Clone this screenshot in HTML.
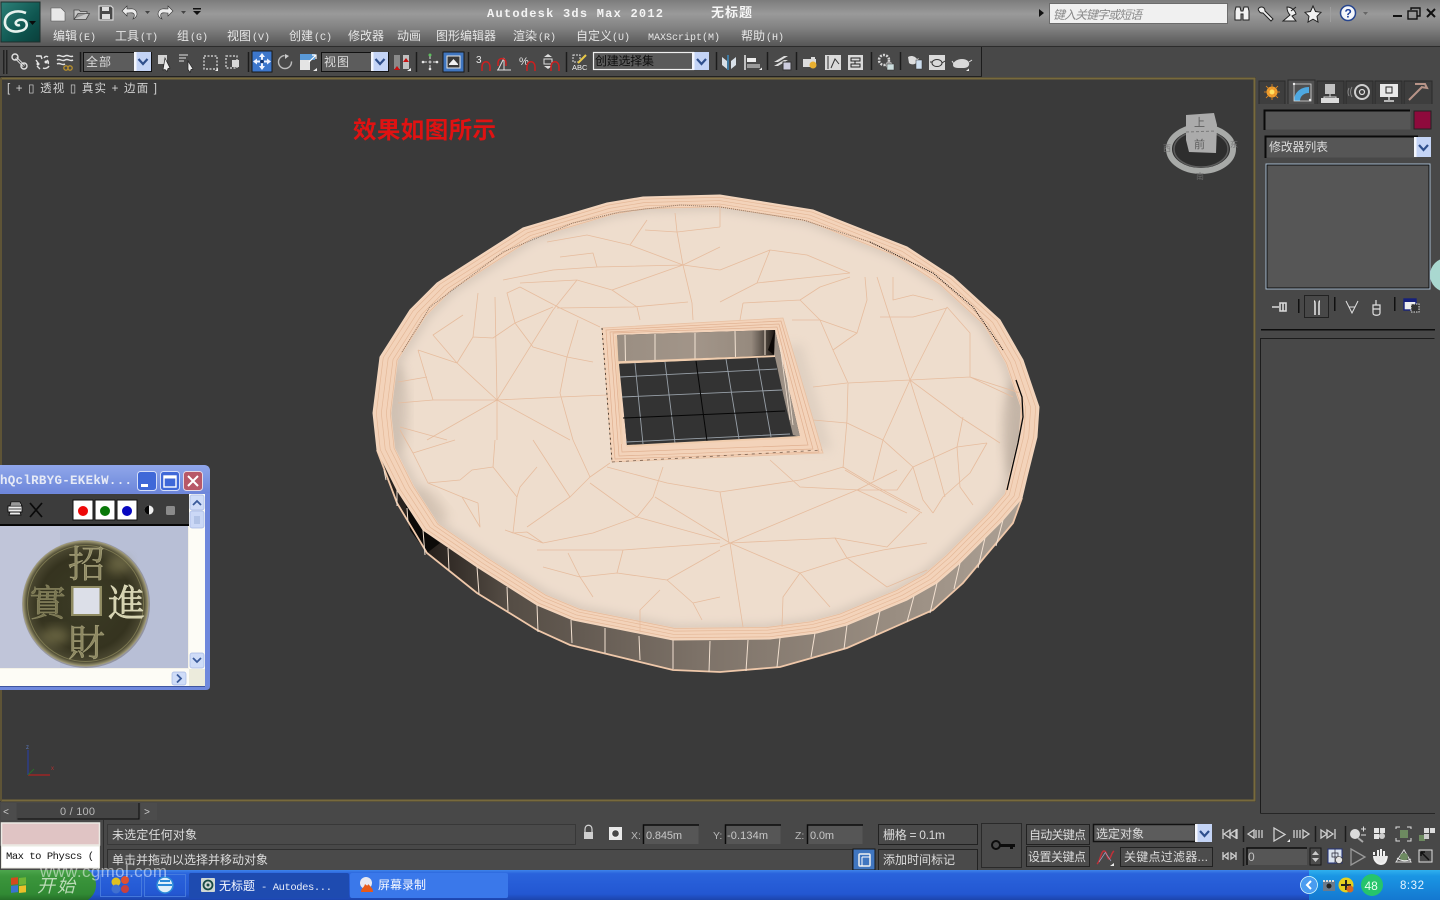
<!DOCTYPE html>
<html><head><meta charset="utf-8"><title>Autodesk 3ds Max 2012</title>
<style>
html,body{margin:0;padding:0;background:#3a3a3a;overflow:hidden;width:1440px;height:900px}
svg{display:block;position:absolute;left:0;top:0}
text{font-family:"Liberation Sans","WenQuanYi Zen Hei","Noto Sans CJK SC",sans-serif;font-size:12px;fill:#dcdcdc}
.m{fill:#e6e6e6}
.mono{font-family:"Liberation Mono","WenQuanYi Zen Hei",monospace}
.ico{fill:none;stroke:#e2e2e2;stroke-width:1.4}
.wh{fill:#e6e6e6;stroke:none}
.sep{stroke:#1c1c1c;stroke-width:1.5}
.wire{fill:none;stroke:#e6bc9e;stroke-width:.8;stroke-linejoin:round}
.side{stroke:#f2e0d0;stroke-width:1}
.cg{font-family:"Noto Serif CJK SC","Liberation Serif",serif;font-size:37px;font-weight:400;stroke-width:.5}
</style></head><body>
<svg width="1440" height="900" viewBox="0 0 1440 900" xmlns="http://www.w3.org/2000/svg">
<defs>
<linearGradient id="tb" x1="0" y1="0" x2="0" y2="1"><stop offset="0" stop-color="#7c7c7c"/><stop offset=".3" stop-color="#9a9a9a"/><stop offset=".6" stop-color="#828282"/><stop offset="1" stop-color="#565656"/></linearGradient>
<linearGradient id="logo" x1="0" y1="0" x2="1" y2="1"><stop offset="0" stop-color="#2d8078"/><stop offset=".6" stop-color="#0f5650"/><stop offset="1" stop-color="#0a3f3b"/></linearGradient>
<linearGradient id="task" x1="0" y1="0" x2="0" y2="1"><stop offset="0" stop-color="#3e84ea"/><stop offset=".12" stop-color="#2a63dc"/><stop offset=".8" stop-color="#2357d2"/><stop offset="1" stop-color="#1c44ac"/></linearGradient>
<linearGradient id="start" x1="0" y1="0" x2="0" y2="1"><stop offset="0" stop-color="#4da64d"/><stop offset=".2" stop-color="#3c963c"/><stop offset=".8" stop-color="#318a34"/><stop offset="1" stop-color="#256f28"/></linearGradient>
<linearGradient id="tray" x1="0" y1="0" x2="0" y2="1"><stop offset="0" stop-color="#2fb0ee"/><stop offset=".2" stop-color="#1a96e4"/><stop offset="1" stop-color="#1478d0"/></linearGradient>
<linearGradient id="wint" x1="0" y1="0" x2="0" y2="1"><stop offset="0" stop-color="#90a6ea"/><stop offset=".5" stop-color="#7e97e2"/><stop offset="1" stop-color="#6d86da"/></linearGradient>
<linearGradient id="sideg" x1="0" y1="0" x2="1" y2="0"><stop offset="0" stop-color="#2a2420"/><stop offset=".08" stop-color="#26201c"/><stop offset=".2" stop-color="#544c44"/><stop offset=".5" stop-color="#7d7268"/><stop offset=".8" stop-color="#998d81"/><stop offset="1" stop-color="#aca094"/></linearGradient>
<linearGradient id="wallg" x1="0" y1="0" x2="1" y2="0"><stop offset="0" stop-color="#9a8e82"/><stop offset=".5" stop-color="#a29589"/><stop offset=".85" stop-color="#968a7e"/><stop offset="1" stop-color="#1c1612"/></linearGradient>
<radialGradient id="coin" cx=".5" cy=".5" r=".5"><stop offset="0" stop-color="#3c3c26"/><stop offset=".75" stop-color="#35331f"/><stop offset=".93" stop-color="#4c4932"/><stop offset="1" stop-color="#a8a27c"/></radialGradient>
<filter id="bl" x="-10%" y="-10%" width="120%" height="120%"><feGaussianBlur stdDeviation="5"/></filter>
<filter id="bs" x="-30%" y="-30%" width="160%" height="160%"><feGaussianBlur stdDeviation="5"/></filter>
<polygon id="top" points="373,413 380,357 410,310 437,283 523,228 607,203 643,197 720,195 813,210 907,247 953,277 1000,320 1023,360 1039,407 1037,437 1027,477 1022,498 1003,520 960,563 937,583 907,600 847,625 817,633 770,639 673,640 573,620 537,605 477,567 423,530 397,490 377,450"/>
<clipPath id="inner"><polygon transform="translate(706,418) scale(.945) translate(-706,-418)" points="373,413 380,357 410,310 437,283 523,228 607,203 643,197 720,195 813,210 907,247 953,277 1000,320 1023,360 1039,407 1037,437 1027,477 1022,498 1003,520 960,563 937,583 907,600 847,625 817,633 770,639 673,640 573,620 537,605 477,567 423,530 397,490 377,450"/></clipPath>
<clipPath id="img"><rect x="0" y="526" width="188" height="142"/></clipPath>
<g id="dd"><rect x="0" y="0" width="17" height="19" fill="#c4d4f6"/><rect x="0" y="0" width="2.5" height="19" fill="#f4f6fc"/><path d="M4.5 7l4.5 5 4.5-5" fill="none" stroke="#2f4f8c" stroke-width="2.2"/></g>
</defs>

<!-- base -->
<rect width="1440" height="900" fill="#484848"/>
<!-- title bar -->
<rect width="1440" height="46" fill="url(#tb)"/>
<rect y="46" width="1440" height="1" fill="#2c2c2c"/>
<!-- app logo -->
<rect x="1" y="2" width="39" height="40" fill="url(#logo)" stroke="#1e2e2c"/>
<path d="M26 13C16 9 6 13 5 21c-1 8 7 12 15 10 6-1 8-5 6-9-2-3-8-3-10 0-1 2 1 4 4 3" fill="none" stroke="#e8f2ee" stroke-width="2.6"/>
<path d="M29 21l7 0-3.500 4z" fill="#0a0a0a"/>
<!-- quick access -->
<path d="M51 8h10l4 4v9H51z" fill="#e8e8e8" stroke="#555" stroke-width=".6"/>
<path d="M74 19V10h5l1.500 1.500H87v2h-9l-4 6h12l3.500-6H87" fill="#c8c8c8" stroke="#444" stroke-width=".8"/>
<path d="M99 6h12l2 2v12H99z" fill="#484848" stroke="#d8d8d8" stroke-width="1.200"/>
<rect x="102" y="7" width="7" height="4" fill="#dcdcdc"/><rect x="102" y="14" width="8" height="5" fill="#dcdcdc"/>
<path d="M133 19c4-2 5-5 3-8s-5-2-9-2V6l-5 5 5 5v-3c3 0 6-1 7 1s0 3-1 5z" fill="#ececec" stroke="#333" stroke-width=".6"/>
<path d="M145 11h5l-2.500 3z" fill="#444"/>
<path d="M162 19c-4-2-5-5-3-8s5-2 9-2V6l5 5-5 5v-3c-3 0-6-1-7 1s0 3 1 5z" fill="#ececec" stroke="#333" stroke-width=".6"/>
<path d="M181 11h5l-2.500 3z" fill="#444"/>
<rect x="193" y="8" width="8" height="1.500" fill="#111"/><path d="M193 11h8l-4 4z" fill="#111"/>
<!-- title -->
<text class="mono" x="487" y="17" style="font-size:12px;fill:#f4f4f4;font-weight:700" textLength="176">Autodesk 3ds Max  2012</text>
<text x="711" y="17" style="font-size:13px;fill:#f6f6f6;font-weight:700" textLength="41">无标题</text>
<!-- search -->
<path d="M1039 9l5 4-5 4z" fill="#111"/>
<rect x="1049.500" y="3.500" width="178" height="20" fill="#f0f0f0" stroke="#6c6c6c"/>
<text x="1053" y="19" style="fill:#8a8a8a;font-style:italic" textLength="89">键入关键字或短语</text>
<path d="M1235 11l1-4h4l1 4h2l1-4h4l1 4v9h-6v-6h-2v6h-6z" fill="#f2f2f2" stroke="#222" stroke-width="1"/>
<path d="M1259 8a3.500 3.500 0 0 1 5 0c1 1 1 2 1 3l8 8-2 2-8-8c-2 0-3 0-4-2-1-1-1-2 0-3z" fill="#f0f0f0" stroke="#222"/>
<path d="M1283 21h13l-4-5 4-2c-1-4-5-7-9-7 0 3 1 6 3 8zM1291 11l5-4" fill="#f0f0f0" stroke="#222"/>
<path d="M1313 6l2.500 5.500 5.500.8-4 4 1 5.700-5-2.800-5 2.800 1-5.700-4-4 5.500-.8z" fill="#f2f2f2" stroke="#222"/>
<line x1="1330.500" y1="7" x2="1330.500" y2="22" stroke="#9e9e9e"/>
<circle cx="1348" cy="13" r="7.500" fill="#f4f6fa" stroke="#26458e" stroke-width="1.500"/>
<text x="1344.500" y="17.500" style="fill:#1d3f9a;font-weight:700;font-size:12px">?</text>
<path d="M1363 12h5l-2.500 3z" fill="#666"/>
<rect x="1393" y="15" width="9" height="2" fill="#111"/>
<rect x="1408" y="11" width="9" height="8" fill="none" stroke="#111" stroke-width="1.400"/><path d="M1411 10V8h9v8h-3" fill="none" stroke="#111" stroke-width="1.400"/>
<path d="M1427 9l8 8M1435 9l-8 8" stroke="#111" stroke-width="2"/>
<!-- menu -->
<text class="m" x="53" y="40">编辑</text><text class="m mono" x="78" y="40" style="font-size:10px">(E)</text>
<text class="m" x="115" y="40">工具</text><text class="m mono" x="140" y="40" style="font-size:10px">(T)</text>
<text class="m" x="177" y="40">组</text><text class="m mono" x="190" y="40" style="font-size:10px">(G)</text>
<text class="m" x="227" y="40">视图</text><text class="m mono" x="252" y="40" style="font-size:10px">(V)</text>
<text class="m" x="289" y="40">创建</text><text class="m mono" x="314" y="40" style="font-size:10px">(C)</text>
<text class="m" x="348" y="40">修改器</text>
<text class="m" x="397" y="40">动画</text>
<text class="m" x="436" y="40">图形编辑器</text>
<text class="m" x="513" y="40">渲染</text><text class="m mono" x="538" y="40" style="font-size:10px">(R)</text>
<text class="m" x="576" y="40">自定义</text><text class="m mono" x="612" y="40" style="font-size:10px">(U)</text>
<text class="m mono" x="648" y="40" style="font-size:10px" textLength="72">MAXScript(M)</text>
<text class="m" x="741" y="40">帮助</text><text class="m mono" x="766" y="40" style="font-size:10px">(H)</text>

<!-- main toolbar -->
<rect y="47" width="982" height="30" fill="#494949"/>
<rect x="981" y="47" width="1" height="30" fill="#1c1c1c"/>
<rect x="0" y="76" width="982" height="1" fill="#222"/>
<rect x="3" y="50" width="1.500" height="24" fill="#222"/><rect x="6" y="50" width="1.500" height="24" fill="#222"/>
<!-- link -->
<path d="M16 58l8 8" stroke="#e2e2e2" stroke-width="3"/><path d="M16 58l8 8" stroke="#494949" stroke-width="1"/><circle cx="15" cy="57" r="3" class="ico"/><circle cx="24" cy="66" r="3" class="ico"/>
<path d="M36 56h5l1 3M48 57c-1-1-3-1-4 1M36 60l2 3M43 68c2 1 5 0 6-2M47 60c1 1 2 2 1 4M37 66l3 3" class="ico"/>
<circle cx="38" cy="64" r="1.500" class="wh"/><circle cx="46" cy="62" r="1.500" class="wh"/>
<path d="M57 56c3-2 5 2 8 0s5 2 8 0M57 60c3-2 5 2 8 0s5 2 8 0M57 64c3-2 5 2 8 0" class="ico" stroke-width="1.100"/>
<circle cx="66" cy="68" r="2.200" fill="none" stroke="#b9902c" stroke-width="1.300"/><circle cx="70" cy="68" r="2.200" fill="none" stroke="#b9902c" stroke-width="1.300"/>
<line class="sep" x1="80.500" y1="52" x2="80.500" y2="72"/>
<!-- filter dd -->
<rect x="83.500" y="52.500" width="68" height="19" fill="#5c5c5c" stroke="#121212"/>
<text x="86" y="66" textLength="25">全部</text>
<use href="#dd" x="134" y="52"/>
<!-- select -->
<rect x="158" y="55" width="9" height="9" fill="#d4d4d4"/>
<path d="M165 58l5 10-2 .5-1 3-2-2-2 .5z" fill="#eee" stroke="#222" stroke-width=".7"/>
<path d="M179 55h9M179 58h7M179 61h5" stroke="#e2e2e2" stroke-width="1"/><path d="M188 61l5 8-2 .5-1 3-2-3z" fill="#eee" stroke="#222" stroke-width=".7"/>
<rect x="204" y="56" width="13" height="13" fill="none" stroke="#e2e2e2" stroke-width="1.200" stroke-dasharray="2 1.500"/>
<path d="M215 71l3-3v3z" fill="#eee"/>
<rect x="226" y="56" width="11" height="12" fill="none" stroke="#e2e2e2" stroke-width="1.200" stroke-dasharray="2 1.500"/>
<rect x="232" y="60" width="7" height="7" fill="#d8d8d8"/>
<line class="sep" x1="248.500" y1="52" x2="248.500" y2="72"/>
<!-- move -->
<rect x="252" y="51" width="20" height="21" fill="#3d77cc" stroke="#181818"/>
<path d="M262 53l3 4h-2v3h-2v-3h-2zM262 70l3-4h-2v-3h-2v3h-2zM253 61.500l4-3v2h3v2h-3v2zM271 61.500l-4-3v2h-3v2h3v2z" fill="#f0f4ff"/>
<circle cx="262" cy="61.500" r="1.800" fill="#16366e"/>
<circle cx="285" cy="62" r="6.500" fill="none" stroke="#bdbdbd" stroke-width="1.400" stroke-dasharray="30 10"/><path d="M285 54l4 2-4 3z" fill="#ccc"/>
<rect x="300" y="60" width="10" height="10" fill="#e4e4e4"/><rect x="300" y="54" width="15" height="6" fill="#5a9ad8"/><path d="M309 62l7-7M312 55h4v4" stroke="#fff" fill="none" stroke-width="1.200"/><path d="M313 71l4-3v3z" fill="#eee"/>
<rect x="321.500" y="52.500" width="67" height="19" fill="#5c5c5c" stroke="#121212"/>
<text x="324" y="66" textLength="25">视图</text>
<use href="#dd" x="371" y="52"/>
<rect x="394" y="55" width="6" height="14" fill="#8a8a8a"/><rect x="403" y="55" width="6" height="14" fill="#c0c0c0"/><path d="M394 70l3-4 3 4zM403 62l3-4 3 4z" fill="#c81010"/><path d="M407 71l4-3v3z" fill="#eee"/>
<line class="sep" x1="416.500" y1="52" x2="416.500" y2="72"/>
<path d="M430 56v12M424 62h12" stroke="#dcdcdc" stroke-width="1" stroke-dasharray="3 1.500"/><circle cx="430" cy="55" r="1.500" fill="#5dc05d"/><circle cx="423" cy="62" r="1.300" class="wh"/><circle cx="430" cy="69" r="1.300" class="wh"/><circle cx="437" cy="62" r="1.300" class="wh"/>
<rect x="443" y="52" width="21" height="20" fill="#4076c0" stroke="#181818"/>
<path d="M447 56h13v12h-13z" fill="#3a3a3a" stroke="#e8e8e8"/><path d="M449 65h9v-1l-4.500-5-4.500 5z" fill="#f2f2f2"/>
<line class="sep" x1="468.500" y1="52" x2="468.500" y2="72"/>
<!-- snaps -->
<text x="476" y="63" style="font-size:10px;fill:#e8e8e8">3</text><path d="M482 71v-4c0-7 8-7 8 0v4" fill="none" stroke="#cc2020" stroke-width="1.500"/>
<path d="M498 70l6-12v12zM497 70h14" fill="none" stroke="#ddd" stroke-width="1"/><path d="M498 66v-3c0-6 8-6 8 0v3" fill="none" stroke="#cc2020" stroke-width="1.500"/>
<text x="519" y="65" style="font-size:11px;fill:#e8e8e8">%</text><path d="M527 71v-4c0-7 8-7 8 0v4" fill="none" stroke="#cc2020" stroke-width="1.500"/>
<path d="M544 57l4-3 4 3zM544 66l4 3 4-3z" fill="#ddd"/><rect x="544" y="59" width="8" height="5" fill="none" stroke="#ddd"/><path d="M551 71v-4c0-7 8-7 8 0v4" fill="none" stroke="#cc2020" stroke-width="1.500"/>
<line class="sep" x1="566.500" y1="52" x2="566.500" y2="72"/>
<path d="M573 55h7v7h-7z" fill="none" stroke="#ddd" stroke-dasharray="2 1"/><path d="M578 63l8-8" stroke="#e8c848" stroke-width="2"/>
<text x="572" y="70" style="font-size:7.500px;fill:#eee">ABC</text>
<!-- named sel -->
<rect x="593.500" y="52.500" width="100" height="17" fill="#5a5a5a" stroke="#f0f0f0" stroke-width="1.200"/>
<text x="595" y="65" style="fill:#0e0e0e" textLength="59">创建选择集</text>
<rect x="692" y="52" width="17" height="18" fill="#c4d4f6"/><rect x="692" y="52" width="2.500" height="18" fill="#f4f6fc"/><path d="M697 59l4.500 5 4.500-5" fill="none" stroke="#2f4f8c" stroke-width="2.200"/>
<line class="sep" x1="716.500" y1="52" x2="716.500" y2="70"/>
<path d="M722 57l5 4v8l-5-4zM736 57l-5 4v8l5-4z" fill="#d8e0e8"/><path d="M728 55v15" stroke="#3a8ac0" stroke-width="1.500"/>
<path d="M745 55v15" stroke="#e8e8e8" stroke-width="1.500"/><rect x="747" y="58" width="9" height="4" fill="#eee"/><rect x="747" y="64" width="13" height="4" fill="#999"/><path d="M759 70l3-2.500v2.500z" fill="#eee"/>
<line class="sep" x1="767.500" y1="52" x2="767.500" y2="70"/>
<path d="M774 62l10-6h4l-10 6zM774 66l10-6h4l-10 6z" fill="#ddd"/><rect x="783" y="62" width="8" height="8" fill="#ccd" stroke="#333"/>
<line class="sep" x1="796.500" y1="52" x2="796.500" y2="70"/>
<path d="M803 59h8v-2h4v2h1v8h-13z" fill="#dcdcdc"/><circle cx="813" cy="65" r="3.500" fill="#e8b030"/>
<rect x="825" y="55" width="16" height="15" fill="#dadada"/><path d="M828 56v13M831 68l4-9 4 5" stroke="#333" fill="none"/>
<rect x="848" y="55" width="15" height="15" fill="#dadada"/><path d="M851 58h9v3h-9zM851 64h9v3h-9z" fill="none" stroke="#222"/><path d="M855 61v3" stroke="#222"/>
<line class="sep" x1="871.500" y1="52" x2="871.500" y2="70"/>
<circle cx="884" cy="60" r="5" fill="none" stroke="#d4d4d4" stroke-width="2.500" stroke-dasharray="2 1.200"/><circle cx="889" cy="65" r="3.500" fill="#aaa"/><rect x="887" y="64" width="7" height="6" fill="#cdd" stroke="#333" stroke-width=".5"/>
<line class="sep" x1="900.500" y1="52" x2="900.500" y2="70"/>
<path d="M908 57c3-2 7-1 9 2l2-1-2 4c-2 3-6 3-8 1z" fill="#ddd"/><rect x="916" y="60" width="6" height="9" fill="#cde" stroke="#333" stroke-width=".5"/>
<rect x="929" y="55" width="16" height="15" fill="#dadada"/><ellipse cx="937" cy="63" rx="5" ry="3.500" fill="none" stroke="#333"/><path d="M932 62h-2M942 63l3-2" stroke="#333"/>
<path d="M953 65c0-3 4-6 9-6s8 3 7 6c-1 3-4 3-8 3s-8 0-8-3z" fill="#d8d8d8"/><path d="M954 64l-2-3M969 62l3-2" stroke="#ddd"/><path d="M966 71l3-2.500v2.500z" fill="#eee"/>

<!-- viewport -->
<rect x="0" y="77" width="1256" height="726" fill="#3a3a3a"/>
<path d="M1 78.500H1254.500V800.500H1" fill="none" stroke="#786a3c" stroke-width="2"/>
<line x1="1" y1="78" x2="1" y2="801" stroke="#5e5436" stroke-width="2"/>
<text x="7" y="92" style="fill:#d2d2d2;font-size:11.500px" textLength="150" xml:space="preserve">[ + ▯ 透视 ▯ 真实 + 边面 ]</text>
<text x="353" y="138" style="font-size:23.500px;font-weight:700;fill:#e01212" textLength="143">效果如图所示</text>

<!-- nav cube -->
<ellipse cx="1201" cy="149" rx="32" ry="22" fill="#2e2e2e" stroke="#a8aaa8" stroke-width="6"/>
<ellipse cx="1201" cy="149" rx="27" ry="18" fill="none" stroke="#5c5c5c" stroke-width="1.500"/>
<path d="M1186 115l28-2 3 12-1 28-27-1-3-12z" fill="#ababab"/>
<path d="M1186 132l30-1" stroke="#7a7a7a" stroke-dasharray="3 2"/>
<text x="1194" y="126" style="font-size:11px;fill:#5e5e5e">上</text>
<text x="1194" y="148" style="font-size:11px;fill:#5e5e5e">前</text>
<text x="1163" y="151" style="font-size:8px;fill:#777">西</text>
<text x="1230" y="147" style="font-size:8px;fill:#777">东</text>
<text x="1196" y="179" style="font-size:8px;fill:#6a6a6a">南</text>

<!-- axis gizmo -->
<path d="M28 775V750" stroke="#2a3e9c" stroke-width="1.200"/><path d="M28 775H50" stroke="#b02020" stroke-width="1.200"/><path d="M28 775l6-6" stroke="#2a6e2a"/>
<text x="26" y="749" style="font-size:6px;fill:#5a78c0">z</text><text x="51" y="770" style="font-size:6px;fill:#b03030">x</text>

<!-- coin side -->
<polygon points="377,450 397,503 427,553 477,593 537,630 570,645 673,670 720,672 780,667 847,648 933,610 963,583 1013,523 1022,498 1003,520 960,563 937,583 907,600 847,625 817,633 770,639 673,640 573,620 537,605 477,567 423,530 397,490" fill="url(#sideg)"/>
<polygon points="405,500 423,530 440,543 427,553 410,530" fill="#0c0a08"/>
<path d="M377 450L397 503 427 553 477 593 537 630 570 645 673 670 720 672 780 667 847 648 933 610 963 583 1013 523 1022 498" fill="none" stroke="#efc8aa" stroke-width="1.800"/>
<g class="side">
<path d="M384 470l2 10M397 490v16M407 508l1 14M423 530l2 25M448 548l1 22M477 567l2 27M507 587l1 24M537 605l1 27M571 620l1 23M605 628v25M639 636l1 24M673 640v29M710 641l-1 31M748 640l-2 31M780 638l-3 29M815 633l-4 24M847 625l-3 24M880 611l-5 24M914 596l-7 26M937 583l-7 30M960 563l-6 26M985 538l-7 30M1003 520l-7 26"/>
</g>
<!-- coin top -->
<use href="#top" fill="#f3d3ba" stroke="#f3d6be" stroke-width="1"/>
<g fill="none" stroke="#e4b898" stroke-width=".7">
<use href="#top" transform="translate(706,418) scale(.99) translate(-706,-418)"/>
<use href="#top" transform="translate(706,418) scale(.975) translate(-706,-418)"/>
<use href="#top" transform="translate(706,418) scale(.96) translate(-706,-418)"/>
<use href="#top" transform="translate(706,418) scale(.948) translate(-706,-418)"/>
</g>
<!-- inner surface with shading -->
<g clip-path="url(#inner)">
<rect x="340" y="170" width="740" height="500" fill="#d9cabc"/>
<use href="#top" fill="#eeddcd" filter="url(#bl)" transform="translate(706,418) scale(.93) translate(-706,-418)"/>
<ellipse cx="432" cy="505" rx="22" ry="9" fill="#c2b2a2" opacity=".45" filter="url(#bs)" transform="rotate(50 432 505)"/>
<ellipse cx="1015" cy="430" rx="12" ry="50" fill="#b0a294" opacity=".6" filter="url(#bs)"/>
<ellipse cx="398" cy="410" rx="10" ry="45" fill="#c4b6a8" opacity=".6" filter="url(#bs)"/>
<polygon points="802,345 832,450 800,450 785,345" fill="#c6baae" opacity=".35" filter="url(#bs)"/>
</g>
<!-- dashed rim -->
<path d="M402 352L430 307 503 252 573 223 620 212 680 205 720 207 803 220 870 242" fill="none" stroke="#6a5444" stroke-width="1" stroke-dasharray="1 1" opacity=".7"/>
<path d="M870 242L933 273 973 307 1003 350" fill="none" stroke="#241a14" stroke-width="1.100" stroke-dasharray="1 1"/>
<path d="M1016 380L1022 397 1023 417 1018 443 1007 490" fill="none" stroke="#080808" stroke-width="1.300"/>
<!-- wires -->
<g class="wire">
<path d="M418 350L433 400 497 400 560 397 607 395M497 400L457 363 418 350M457 363L433 335 463 315M497 400L495 297M497 400L553 310 577 280M457 363L473 337 478 293M473 337L493 338 515 323 553 307M515 323L507 293 520 287M515 323L533 347 567 357 593 362M567 357L560 393 573 440M578 320L567 357M520 287L560 308 600 327M520 283L577 280 612 290 637 307 640 320M557 308L633 307 688 302M503 280L553 270 597 267 683 265M683 265L630 245 587 235 547 242M597 267L593 253 560 257M630 245L647 220M683 265L677 232 675 213M645 230L677 232 720 227M683 265L720 247M683 265L692 303 693 320M683 265L612 290M683 265L720 270M497 400L570 440M497 400L497 440M497 400L427 440M398 403L433 400M400 427L447 440M398 382L427 377"/>
<path d="M495 440L493 467 472 470 460 480M455 440L413 453 428 483 462 497 478 503M460 480L428 483M493 467L517 497 513 533M462 497L480 527 478 503M537 467L520 487 517 497M533 440L570 497 527 527M573 440L590 477 570 497M610 463L590 477M590 483L637 517 720 540M663 467L653 497 637 517 593 533 543 543 527 532M537 550L623 550 720 543M623 550L617 573 580 577 568 553M617 573L667 580 693 603 702 620M543 567L580 577 593 597M667 580L720 550M693 603L720 597M607 467L667 483 720 492M413 453L400 430M527 532L513 533 505 530M505 530L543 543"/>
<path d="M720 270L770 250 807 255 850 273M770 250L757 283 720 302M757 283L813 277 850 273M743 303L740 320M743 303L800 300 820 287 850 277M800 300L820 320 857 333 867 300 865 277M820 320L792 320M820 320L833 350 848 383 847 420 843 468M857 333L833 350M848 383L910 380 970 377 1020 393M910 380L877 277M910 380L947 307M910 380L883 440 873 480M910 380L960 417 1000 443M910 380L933 453 945 497M880 317L893 317 913 317 947 308M893 277L893 300 913 295 933 300M947 307L970 333 970 377 1013 397M847 383L813 387M813 420L847 423 883 440 913 467 897 490 857 490M913 467L923 500 933 513M913 467L957 447 987 443M963 417L957 447 960 487 973 505M987 443L970 473 943 497 933 513M770 460L800 487 860 490M843 467L870 483 920 510M845 470L872 486 922 513M720 492L800 480 843 467M730 543L857 490 897 470M730 543L835 538 847 558 800 573 783 597 782 627M730 543L800 573M730 543L743 627M720 547L730 543M847 558L883 550 927 543M847 558L887 587 927 570M835 538L887 547 920 513M800 573L830 607M907 513L857 490M655 497L730 543M640 632L640 610 660 590"/>
<path d="M720 205L720 227M720 492L729 543"/>
</g>

<!-- hole -->
<polygon points="602,328 783,318 823,453 612,462" fill="#f3d3ba" stroke="#e8c0a2" stroke-width=".8"/>
<g fill="none" stroke="#e0b090" stroke-width=".7">
<polygon points="606,330 781,321 819,452 615,459"/>
<polygon points="610,332 779,324 813,449 619,456"/>
<polygon points="613,333 777,327 808,445 622,452"/>
</g>
<polygon points="617,335 775,330 800,437 627,446" fill="#3a3a3a"/>
<polygon points="617,335 775,330 773,355 618,362" fill="url(#wallg)"/>
<path d="M625 335l.5 27M655 334v27M695 333v27M735 331l.5 27M765 330v25" stroke="#f2e2d2" stroke-width="1" fill="none"/>
<polygon points="775,330 800,437 793,435 774,357" fill="#9d9186"/>
<path d="M780 345l10 75M785 360l8 65" stroke="#f2e2d2" stroke-width=".8" fill="none"/>
<polygon points="768,350 775,330 774,355" fill="#0c0806"/>
<path d="M618 362.500L775 356.500" stroke="#f0cdae" stroke-width="2.500"/>
<polygon points="619,364 775,357 792,435 627,445" fill="#333"/>
<g stroke="#98a0a8" stroke-width=".9" fill="none">
<path d="M620 377L777 369M622 397L782 390M626 442L790 434"/>
<path d="M635 363L643 444M665 362L675 443M726 359L739 439M757 358L771 437"/>
</g>
<path d="M623 418L785 411M696 361L707 441" stroke="#060606" stroke-width="1" fill="none"/>
<path d="M616 336l6 108M627 446L800 437" stroke="#f0cdae" stroke-width="2" fill="none"/>
<path d="M602 328l10 134" stroke="#2e2218" stroke-width=".8" stroke-dasharray="2 3" fill="none"/>
<path d="M612 462L822 450" stroke="#6c5444" stroke-width=".7" stroke-dasharray="3 4" fill="none"/>

<!-- image window -->
<path d="M0 465H204q5 0 6 5V686q0 4-4 4H0z" fill="#6f88dc"/>
<path d="M0 465H204q5 0 6 5V493H0z" fill="url(#wint)"/>
<text class="mono" x="0" y="484" style="font-size:12.500px;font-weight:700;fill:#e6eaf6" textLength="132">hQclRBYG-EKEkW...</text>
<rect x="137.500" y="471.500" width="19" height="19" rx="3" fill="#3f68d8" stroke="#d5def8"/><rect x="141" y="484" width="7" height="3" fill="#fff"/>
<rect x="160.500" y="471.500" width="19" height="19" rx="3" fill="#3f68d8" stroke="#d5def8"/><rect x="164" y="476" width="12" height="11" fill="none" stroke="#fff" stroke-width="1.400"/><rect x="164" y="476" width="12" height="2.500" fill="#fff"/>
<rect x="183.500" y="471.500" width="19" height="19" rx="3" fill="#b85868" stroke="#e4d8e4"/><path d="M188 476l10 10M198 476l-10 10" stroke="#fff" stroke-width="2"/>
<rect x="0" y="494" width="205" height="193" fill="#f4f2e8"/>
<rect x="0" y="494" width="189" height="31" fill="#3c3c3c"/>
<rect x="0" y="524" width="189" height="2" fill="#060606"/>
<path d="M10 506l1-4h9l2 4M8 506h14v6H8zM10 512l-1 3h12l-1-3" fill="#eee" stroke="#111" stroke-width=".9"/><path d="M10 504h10M9 509h12" stroke="#111" stroke-width=".8"/>
<path d="M30 503l12 14M42 503l-12 14" stroke="#0a0a0a" stroke-width="1.700"/>
<rect x="73" y="500" width="20" height="20" fill="#fff" stroke="#111"/><circle cx="83" cy="511" r="5" fill="#ee0808"/>
<rect x="95" y="500" width="20" height="20" fill="#fff" stroke="#111"/><circle cx="105" cy="511" r="5" fill="#087808"/>
<rect x="117" y="500" width="20" height="20" fill="#fff" stroke="#111"/><circle cx="127" cy="511" r="5" fill="#0808c0"/>
<circle cx="149" cy="510" r="4.500" fill="#eee"/><path d="M149 505.500a4.500 4.500 0 0 0 0 9z" fill="#050505"/>
<rect x="166" y="506" width="9" height="9" rx="1.500" fill="#8a8a8a"/>
<!-- scrollbars -->
<rect x="189" y="494" width="16" height="175" fill="#fdfcf6"/>
<rect x="190" y="495" width="14" height="15" rx="2" fill="#cfdcf8" stroke="#a6b8e4" stroke-width=".7"/><path d="M193 505l4-4 4 4" fill="none" stroke="#3a5a9a" stroke-width="1.800"/>
<rect x="190" y="511" width="14" height="17" rx="2" fill="#cbd8f6" stroke="#a6b8e4" stroke-width=".7"/><path d="M194 517h6M194 519h6M194 521h6M194 523h6" stroke="#8aa0cc" stroke-width=".8"/>
<rect x="190" y="653" width="14" height="15" rx="2" fill="#cfdcf8" stroke="#a6b8e4" stroke-width=".7"/><path d="M193 658l4 4 4-4" fill="none" stroke="#3a5a9a" stroke-width="1.800"/>
<rect x="0" y="669" width="189" height="17" fill="#fdfcf6"/>
<rect x="172" y="672" width="14" height="13" rx="2" fill="#cfdcf8" stroke="#a6b8e4" stroke-width=".7"/><path d="M177 674.500l4 4-4 4" fill="none" stroke="#3a5a9a" stroke-width="1.800"/>
<rect x="189" y="669" width="16" height="17" fill="#ecebdc"/>
<rect x="0" y="686" width="205" height="1" fill="#3f55a0"/>
<!-- coin image -->
<g clip-path="url(#img)">
<rect x="0" y="526" width="188" height="142" fill="#b8bfd6"/>
<rect x="0" y="526" width="60" height="142" fill="#c4c9da" opacity=".6"/>
<circle cx="86" cy="604" r="64" fill="#6e6a6a" opacity=".5"/>
<circle cx="85.500" cy="603.500" r="63" fill="url(#coin)"/>
<circle cx="85.500" cy="603.500" r="58" fill="none" stroke="#7a7650" stroke-width="1"/>
<ellipse cx="118" cy="565" rx="12" ry="9" fill="#8a8458" opacity=".55" filter="url(#bs)"/>
<ellipse cx="55" cy="636" rx="14" ry="9" fill="#8a8458" opacity=".55" filter="url(#bs)"/>
<rect x="71" y="586" width="31" height="30" fill="#8f8b62"/>
<rect x="73.500" y="588" width="26" height="26" fill="#dcdfe8"/>
<text class="cg" x="68" y="577" style="fill:#8d8862;stroke:#b2ad86">招</text>
<text class="cg" x="108" y="616" style="fill:#d6d3b0;stroke:#e2dfc0">進</text>
<text class="cg" x="68" y="656" style="fill:#8d8862;stroke:#a8a37c">財</text>
<text class="cg" x="29" y="616" style="fill:#7a7652;stroke:#8e8a64">實</text>
</g>

<!-- command panel -->
<rect x="1256" y="77" width="184" height="800" fill="#484848"/>
<g fill="#3e3e3e" stroke="#2a2a2a">
<path d="M1259 104V81h26v23"/><path d="M1288 104V80h27v24" fill="#505050"/><path d="M1317 104V81h27v23"/><path d="M1346 104V81h27v23"/><path d="M1375 104V81h27v23"/><path d="M1404 104V81h28v23"/>
</g>
<circle cx="1272" cy="92" r="5.500" fill="#f0a030"/><path d="M1272 84v16M1264 92h16M1266 86l12 12M1278 86l-12 12" stroke="#e88c20" stroke-width=".8"/><circle cx="1272" cy="92" r="2.500" fill="#ffe060"/>
<path d="M1294 101c0-8 6-14 15-14v6c-5 0-9 3-9 8z" fill="#4ea8e0"/><path d="M1294 84v17h17V84z" fill="none" stroke="#dcdcdc" stroke-width=".8"/><circle cx="1294" cy="84" r="1.200" fill="#eee"/><circle cx="1310" cy="100" r="1.200" fill="#eee"/>
<rect x="1325" y="84" width="10" height="10" fill="#c2c2c2"/><path d="M1330 94v3M1324 100v-3h12v3" stroke="#ddd" fill="none"/><rect x="1321" y="98" width="6" height="5" fill="#ddd"/><rect x="1327" y="98" width="6" height="5" fill="#ddd"/><rect x="1333" y="98" width="6" height="5" fill="#ddd"/>
<circle cx="1362" cy="92" r="7" fill="none" stroke="#cfcfcf" stroke-width="2"/><circle cx="1362" cy="92" r="2.500" fill="none" stroke="#ddd" stroke-width="1.200"/><path d="M1352 87q-3 5 0 10M1349 88q-2 4 0 8" stroke="#888" fill="none"/>
<rect x="1380" y="84" width="18" height="13" fill="#e8e8e8"/><rect x="1386" y="87" width="6" height="6" fill="none" stroke="#222"/><path d="M1384 101h10M1389 97v3" stroke="#ddd" stroke-width="1.400"/>
<path d="M1409 100l13-13M1415 84l10 0 2 4-6-1" stroke="#b89488" stroke-width="2" fill="none"/>
<!-- name / color -->
<rect x="1264.500" y="110.500" width="146" height="19" fill="#565656"/><path d="M1264.500 130V110.500H1410" fill="none" stroke="#0a0a0a" stroke-width="2"/>
<rect x="1414" y="111" width="17" height="18" fill="#8e0a3c" stroke="#222"/>
<rect x="1265.500" y="136.500" width="152" height="21" fill="#565656"/><path d="M1265.500 158V136.500H1418" fill="none" stroke="#0a0a0a" stroke-width="2"/>
<text x="1269" y="151" textLength="59">修改器列表</text>
<rect x="1414" y="137" width="17" height="20" fill="#c4d4f6"/><rect x="1414" y="137" width="2.500" height="20" fill="#f4f6fc"/><path d="M1419 145l4.500 5 4.500-5" fill="none" stroke="#2f4f8c" stroke-width="2.200"/>
<rect x="1266" y="164" width="164" height="125" fill="#565656" stroke="#a8bcd0"/>
<rect x="1267" y="165" width="162" height="123" fill="none" stroke="#0c0c0c"/>
<circle cx="1447" cy="275" r="17" fill="#a9d8d0"/>
<!-- panel buttons -->
<path d="M1272 307h7M1280 303v8h6v-8zM1283 303v8" stroke="#dadada" stroke-width="1.600" fill="none"/>
<rect x="1298" y="299" width="1.500" height="14" fill="#111"/>
<rect x="1304.500" y="295.500" width="24" height="22" fill="none" stroke="#222"/>
<path d="M1314 301c1 0 1 2 1 4v10M1320 301c-1 0-1 2-1 4v10" stroke="#e8e8e8" stroke-width="1.500" fill="none"/>
<rect x="1334" y="297" width="1.500" height="14" fill="#111"/>
<path d="M1346 301l6 12 6-12M1349 307h6" stroke="#e0e0e0" fill="none"/>
<path d="M1373 305h7v8c0 3-7 3-7 0zM1373 309h7M1376 300v5" stroke="#e0e0e0" fill="none" stroke-width="1.200"/>
<rect x="1394" y="297" width="1.500" height="14" fill="#111"/>
<rect x="1404" y="299" width="12" height="11" fill="#eee" stroke="#16207c" stroke-width="1.400"/><rect x="1404" y="299" width="12" height="3" fill="#16207c"/><path d="M1411 304h8v8h-8z" fill="#333" stroke="#ddd" stroke-dasharray="1.500 1"/>
<rect x="1261" y="329" width="174" height="1.500" fill="#0c0c0c"/>
<path d="M1260.500 813.500V338.500H1434.500" fill="none" stroke="#1c1c1c"/>
<path d="M1260.500 813.500H1435" fill="none" stroke="#262626"/>

<!-- bottom region -->
<rect x="0" y="802" width="1256" height="68" fill="#484848"/>
<rect x="1" y="803" width="15" height="17" fill="#4c4c4c"/>
<text x="3" y="815" style="font-size:10px;fill:#ccc" class="mono">&lt;</text>
<rect x="17" y="803" width="122" height="16" fill="#444"/><path d="M17.500 819H139V803" fill="none" stroke="#0c0c0c"/>
<text x="60" y="815" style="fill:#b8b8b8;font-size:11px" textLength="35">0 / 100</text>
<rect x="141" y="803" width="16" height="17" fill="#4c4c4c"/>
<text x="144" y="815" style="font-size:10px;fill:#ccc" class="mono">&gt;</text>
<rect x="1.500" y="823" width="98" height="22" fill="#e0c4c4" stroke="#eceae4" stroke-width="1.500"/>
<rect x="1.500" y="846" width="98" height="22" fill="#fff" stroke="#e8e8e0"/>
<text class="mono" x="6" y="859" style="fill:#111;font-size:10.500px" textLength="88">Max to Physcs (</text>
<rect x="103" y="820" width="1" height="50" fill="#2c2c2c"/>
<rect x="107.500" y="824.500" width="468" height="20" fill="#4a4a4a" stroke="#383838"/>
<text x="112" y="839" textLength="85">未选定任何对象</text>
<rect x="107.500" y="849.500" width="745" height="21" fill="#4a4a4a" stroke="#2e2e2e"/>
<text x="112" y="864" textLength="156">单击并拖动以选择并移动对象</text>
<path d="M585 832v-3c0-5 7-5 7 0v3" fill="none" stroke="#d4d4d4" stroke-width="1.200"/><rect x="584" y="832" width="9" height="7" fill="#cfcfcf"/>
<rect x="609" y="827" width="13" height="13" fill="#e8e8e8"/><circle cx="615.500" cy="833.500" r="3.800" fill="#484848" stroke="#f4f4f4"/>
<text x="631" y="839" style="font-size:10.500px;fill:#b8b8b8">X:</text>
<rect x="643.500" y="825" width="55" height="19" fill="#565656"/><path d="M643.500 844V825H699" fill="none" stroke="#0c0c0c" stroke-width="1.500"/>
<text x="646" y="839" style="fill:#c8c8c8;font-size:11px" textLength="36">0.845m</text>
<text x="713" y="839" style="font-size:10.500px;fill:#b8b8b8">Y:</text>
<rect x="725.500" y="825" width="55" height="19" fill="#565656"/><path d="M725.500 844V825H781" fill="none" stroke="#0c0c0c" stroke-width="1.500"/>
<text x="727" y="839" style="fill:#c8c8c8;font-size:11px" textLength="41">-0.134m</text>
<text x="795" y="839" style="font-size:10.500px;fill:#b8b8b8">Z:</text>
<rect x="807.500" y="825" width="55" height="19" fill="#565656"/><path d="M807.500 844V825H863" fill="none" stroke="#0c0c0c" stroke-width="1.500"/>
<text x="810" y="839" style="fill:#c8c8c8;font-size:11px" textLength="24">0.0m</text>
<rect x="878.500" y="824.500" width="99" height="20" fill="#4a4a4a" stroke="#222"/>
<text x="883" y="839" textLength="62">栅格 = 0.1m</text>
<rect x="853" y="849" width="22" height="21" fill="#4076c0" stroke="#161616"/>
<rect x="859" y="854" width="11" height="12" rx="1" fill="none" stroke="#f0f0f0" stroke-width="1.500"/><path d="M862 857h8M862 857v9" stroke="#fff"/>
<rect x="878.500" y="849.500" width="99" height="21" fill="#4a4a4a" stroke="#222"/>
<text x="883" y="864" textLength="72">添加时间标记</text>
<rect x="981.500" y="823.500" width="40" height="44" fill="#4a4a4a" stroke="#2a2a2a"/>
<circle cx="996" cy="845" r="4" fill="none" stroke="#0c0c0c" stroke-width="2"/><path d="M1000 844h15v3h-2v2h-3v-2h-10" fill="#0c0c0c"/>
<rect x="1026.500" y="824.500" width="63" height="20" fill="#4c4c4c" stroke="#222"/>
<text x="1029" y="839" textLength="57">自动关键点</text>
<rect x="1026.500" y="846.500" width="63" height="20" fill="#4c4c4c" stroke="#222"/>
<text x="1028" y="861" textLength="58">设置关键点</text>
<rect x="1093.500" y="824.500" width="102" height="17" fill="#5c5c5c" stroke="#121212" stroke-width="1.500"/>
<text x="1096" y="838" textLength="48">选定对象</text>
<rect x="1195" y="824" width="17" height="18" fill="#c4d4f6"/><rect x="1195" y="824" width="2.500" height="18" fill="#f4f6fc"/><path d="M1200 831l4.500 5 4.500-5" fill="none" stroke="#2f4f8c" stroke-width="2.200"/>
<path d="M1097 864c3-2 4-13 7-13s3 8 5 8 2-6 5-8" fill="none" stroke="#c03038" stroke-width="1.500"/><path d="M1099 862l6-9M1105 852l6 9" stroke="#a0a0c0" stroke-width=".7" fill="none"/><path d="M1110 866l4-3v3z" fill="#eee"/>
<rect x="1120.500" y="847.500" width="92" height="19" fill="#4c4c4c" stroke="#222"/>
<text x="1124" y="861" textLength="84">关键点过滤器...</text>
<!-- transport -->
<g fill="none" stroke="#d0d0d0" stroke-width="1.300">
<path d="M1223 829v10M1237 829v10M1224 834l6-4v8zM1230 834l6-4v8z"/>
<path d="M1248 834l6-4v8zM1256 830v8M1259 830v8M1262 830v8"/>
<path d="M1274 828v13l11-6.500z"/>
<path d="M1294 830v8M1297 830v8M1300 830v8M1303 830l6 4-6 4z"/>
<path d="M1335 829v10M1321 830l6 4-6 4zM1327 830l6 4-6 4z"/>
<path d="M1223 852v8M1236 852v8M1224 856l4-3v6zM1235 856l-4-3v6z"/>
</g>
<line class="sep" x1="1243.500" y1="826" x2="1243.500" y2="842"/>
<line class="sep" x1="1315.500" y1="826" x2="1315.500" y2="842"/>
<line class="sep" x1="1345.500" y1="826" x2="1345.500" y2="842"/>
<line class="sep" x1="1243.500" y1="848" x2="1243.500" y2="866"/>
<path d="M1287 842l3-3v3z" fill="#eee"/>
<circle cx="1355" cy="834" r="5" fill="#dcdcdc"/><path d="M1358 838l5 4" stroke="#aaa" stroke-width="2"/><path d="M1361 829h5M1363.500 826.500v5M1361 835h5" stroke="#ddd"/>
<rect x="1374" y="828" width="5" height="5" fill="#e4e4e4"/><rect x="1380" y="828" width="5" height="5" fill="#e4e4e4"/><rect x="1374" y="834" width="5" height="5" fill="#e4e4e4"/><circle cx="1382" cy="836" r="3" fill="#ccc"/>
<path d="M1396 829v-2h4M1407 827h4v2M1396 838v3h4M1411 838v3h-4" stroke="#e0e0e0" fill="none"/><rect x="1400" y="830" width="8" height="8" fill="#6d8a60"/>
<rect x="1419" y="835" width="6" height="6" fill="#6d8a60"/><rect x="1424" y="828" width="5" height="5" fill="#ddd"/><rect x="1430" y="828" width="5" height="5" fill="#ddd"/><rect x="1424" y="834" width="5" height="5" fill="#ccc"/>
<rect x="1247" y="848" width="60" height="17" fill="#565656"/><path d="M1247 865V848H1307" fill="none" stroke="#0c0c0c" stroke-width="1.500"/>
<text x="1248" y="861" style="fill:#c0c0c0">0</text>
<rect x="1310" y="848" width="11" height="17" fill="#4c4c4c" stroke="#161616"/><path d="M1312 855l3.500-4 3.500 4zM1312 858l3.500 4 3.500-4z" fill="#ccc"/>
<rect x="1328" y="849" width="14" height="14" fill="#dce4ee" stroke="#20307a"/><path d="M1332 853h6v4h-6zM1335 849v14" stroke="#223" fill="none" stroke-width=".7"/><circle cx="1339" cy="860" r="3.500" fill="#e4e4e4" stroke="#333" stroke-width=".6"/>
<path d="M1351 849l14 8-14 8z" fill="none" stroke="#999" stroke-width="1.300"/>
<path d="M1374 855v-3M1378 856v-6M1381 856v-7M1384 856v-5M1374 856c0 4 3 8 7 8s5-3 6-8" stroke="#f0f0f0" stroke-width="2" fill="#e8e8e8"/>
<path d="M1396 862l8-12 7 12z" fill="none" stroke="#dcdcdc"/><circle cx="1404" cy="857" r="4" fill="#6d8a60"/><path d="M1397 858q7 5 14 1" stroke="#eee" fill="none"/>
<rect x="1419" y="850" width="13" height="12" fill="none" stroke="#e0e0e0"/><path d="M1421 852l8 8M1421 852h4M1421 852v4" stroke="#111" stroke-width="1.500" fill="none"/>

<!-- taskbar -->
<rect y="870" width="1440" height="30" fill="url(#task)"/>
<path d="M0 870H88q8 6 8 15t-8 15H0z" fill="url(#start)"/>
<rect x="11" y="877" width="7" height="7" fill="#d24a1e" transform="skewY(-6) translate(0,2)"/><rect x="19" y="877" width="7" height="7" fill="#6fb536" transform="skewY(-6) translate(0,3)"/><rect x="11" y="885" width="7" height="7" fill="#3a74d0" transform="skewY(-6) translate(0,2)"/><rect x="19" y="885" width="7" height="7" fill="#ecc02a" transform="skewY(-6) translate(0,3)"/>
<text x="37" y="892" style="font-size:18px;font-style:italic;fill:#bcdcb8" textLength="38">开始</text>
<rect x="100.500" y="874.500" width="41" height="22" fill="none" stroke="#4e82e0" stroke-width=".8"/>
<rect x="144.500" y="874.500" width="41" height="22" fill="none" stroke="#4e82e0" stroke-width=".8"/>
<circle cx="116" cy="882" r="4.500" fill="#e0c020"/><circle cx="125" cy="880" r="4" fill="#e05030"/><circle cx="116" cy="889" r="4.500" fill="#4070d0"/><circle cx="125" cy="889" r="4" fill="#c84040"/>
<circle cx="165" cy="885" r="8" fill="#dff0fa"/><path d="M158 885h14M160 881h10" stroke="#2a8ad8" stroke-width="2"/><circle cx="165" cy="885" r="8" fill="none" stroke="#2a8ad8" stroke-width="1.500"/>
<rect x="189" y="873" width="160" height="25" rx="2" fill="#1e4bb0"/>
<rect x="201" y="878" width="14" height="14" rx="1" fill="#cfd8d4"/><circle cx="208" cy="885" r="4.500" fill="none" stroke="#184a44" stroke-width="1.800"/><circle cx="208" cy="885" r="1.500" fill="#184a44"/>
<text x="219" y="890" style="fill:#f6f8ff" textLength="36">无标题</text>
<text class="mono" x="261" y="890" style="font-size:10.500px;fill:#e8ecf8" textLength="71">- Autodes...</text>
<rect x="350" y="873" width="158" height="25" rx="2" fill="#3a78ea"/>
<circle cx="366" cy="883" r="6" fill="#e8e8f0"/><path d="M361 892c0-4 3-4 4-8 2 2 3 2 3 0 2 2 5 4 5 8z" fill="#e85a18"/>
<text x="378" y="889" style="fill:#f6f8ff" textLength="48">屏幕录制</text>
<rect x="1309" y="870" width="131" height="30" fill="url(#tray)"/>
<circle cx="1309" cy="885" r="8.500" fill="#4a9cf0" stroke="#dff" stroke-width=".8"/><path d="M1311 881l-4 4 4 4" fill="none" stroke="#fff" stroke-width="2"/>
<rect x="1323" y="881" width="12" height="10" fill="#6a7a8c"/><path d="M1323 881h12" stroke="#ddd" stroke-dasharray="2 1" stroke-width="2"/><circle cx="1329" cy="886" r="2.500" fill="#222"/>
<circle cx="1346" cy="885" r="7.500" fill="#e6d020"/><path d="M1341 885h10M1346 880v10" stroke="#222" stroke-width="2"/><circle cx="1350" cy="889" r="3.500" fill="#d86a20"/>
<circle cx="1372" cy="885" r="11" fill="#26c46c"/>
<text x="1364.500" y="890" style="fill:#e8fff0;font-size:12px">48</text>
<text x="1400" y="889" style="fill:#e4f4ff;font-size:11.500px" textLength="24">8:32</text>
<!-- watermark -->
<text x="40" y="877" style="font-size:17px;fill:#fff;fill-opacity:.5" textLength="127">www.cgmol.com</text>
</svg>
</body></html>
